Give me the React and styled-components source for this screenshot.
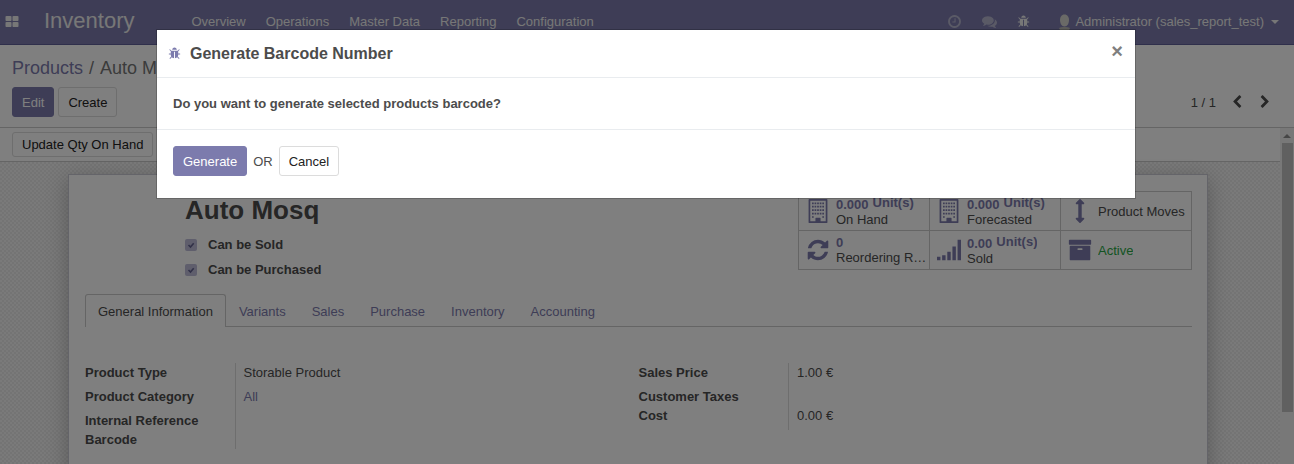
import React from "react";
import styled, { createGlobalStyle } from "styled-components";

const Global = createGlobalStyle`
  * { box-sizing: border-box; }
  body {
    margin: 0;
    overflow: hidden;
    font-family: "Liberation Sans", Arial, sans-serif;
    font-size: 13px;
    line-height: 19px;
    color: #4c4c4c;
    background: #fff;
  }
  button { font: inherit; cursor: pointer; }
  a { color: #7c7bad; text-decoration: none; }
`;

const PATHS = {
  grid: "M832 1024v384q0 52-38 90t-90 38h-512q-52 0-90-38t-38-90v-384q0-52 38-90t90-38h512q52 0 90 38t38 90zm0-768v384q0 52-38 90t-90 38h-512q-52 0-90-38t-38-90v-384q0-52 38-90t90-38h512q52 0 90 38t38 90zm896 768v384q0 52-38 90t-90 38h-512q-52 0-90-38t-38-90v-384q0-52 38-90t90-38h512q52 0 90 38t38 90zm0-768v384q0 52-38 90t-90 38h-512q-52 0-90-38t-38-90v-384q0-52 38-90t90-38h512q52 0 90 38t38 90z",
  clock: "M1024 544v448q0 14-9 23t-23 9h-320q-14 0-23-9t-9-23v-64q0-14 9-23t23-9h224v-352q0-14 9-23t23-9h64q14 0 23 9t9 23zm416 352q0-148-73-273t-198-198-273-73-273 73-198 198-73 273 73 273 198 198 273 73 273-73 198-198 73-273zm224 0q0 209-103 385.5t-279.5 279.5-385.5 103-385.5-103-279.5-279.5-103-385.5 103-385.5 279.5-279.5 385.5-103 385.5 103 279.5 279.5 103 385.5z",
  comments: "M1408 768q0 139-94 257t-256.5 186.5-353.5 68.5q-86 0-176-16-124 88-278 128-36 9-86 16h-3q-11 0-20.5-8t-11.5-21q-1-3-1-6.5t.5-6.5 2-6l2.5-5 3.5-5.5 4-5 4.5-5 4-4.5q5-6 23-25t26-29.5 22.5-29 25-38.5 20.5-44q-124-72-195-177t-71-224q0-139 94-257t256.5-186.5 353.5-68.5 353.5 68.5 256.5 186.5 94 257zm384 256q0 120-71 224.5t-195 176.5q10 24 20.5 44t25 38.5 22.5 29 26 29.5 23 25q1 1 4 4.5t4.5 5 4 5 3.5 5.5l2.5 5 2 6 .5 6.5-1 6.5q-3 14-13 22t-22 7q-50-7-86-16-154-40-278-128-90 16-176 16-271 0-472-132 58 4 88 4 161 0 309-45t264-129q125-92 192-212t67-254q0-77-23-152 129 71 204 178t75 230z",
  bug: "M1696 960q0 26-19 45t-45 19h-224q0 171-67 290l208 209q19 19 19 45t-19 45q-18 19-45 19t-45-19l-198-197q-5 5-15 13t-42 28.5-65 36.5-82 29-97 13v-896h-128v896q-51 0-101.5-13.5t-87-33-66-39-43.5-32.5l-15-14-183 207q-20 21-48 21-24 0-43-16-19-18-20.5-44.5t15.5-46.5l202-227q-58-114-58-274h-224q-26 0-45-19t-19-45 19-45 45-19h224v-294l-173-173q-19-19-19-45t19-45 45-19 45 19l173 173h844l173-173q19-19 45-19t45 19 19 45-19 45l-173 173v294h224q26 0 45 19t19 45zm-480-576h-640q0-133 93.5-226.5t226.5-93.5 226.5 93.5 93.5 226.5z",
  arrows: "M1216 320q0 26-19 45t-45 19h-128v1024h128q26 0 45 19t19 45-19 45l-256 256q-19 19-45 19t-45-19l-256-256q-19-19-19-45t19-45 45-19h128v-1024h-128q-26 0-45-19t-19-45 19-45l256-256q19-19 45-19t45 19l256 256q19 19 19 45z",
  refresh: "M1639 1056q0 5-1 7-64 268-268 434.5t-478 166.5q-146 0-282.5-55t-243.5-157l-129 129q-19 19-45 19t-45-19-19-45v-448q0-26 19-45t45-19h448q26 0 45 19t19 45-19 45l-137 137q71 66 161 102t187 36q134 0 250-65t186-179q11-17 53-117 8-23 30-23h192q13 0 22.5 9.5t9.5 22.5zm25-800v448q0 26-19 45t-45 19h-448q-26 0-45-19t-19-45 19-45l138-138q-148-137-349-137-134 0-250 65t-186 179q-11 17-53 117-8 23-30 23h-199q-13 0-22.5-9.5t-9.5-22.5v-7q65-268 270-434.5t480-166.5q146 0 284 55.5t245 156.5l130-129q19-19 45-19t45 19 19 45z",
  signal: "M0 1408h256v256h-256zM384 1280h256v384h-256zM768 1024h256v640h-256zM1152 640h256v1024h-256zM1536 128h256v1536h-256z",
  archive: "M1088 832q0-26-19-45t-45-19h-256q-26 0-45 19t-19 45 19 45 45 19h256q26 0 45-19t19-45zm576-192v960q0 26-19 45t-45 19h-1408q-26 0-45-19t-19-45v-960q0-26 19-45t45-19h1408q26 0 45 19t19 45zm64-448v256q0 26-19 45t-45 19h-1536q-26 0-45-19t-19-45v-256q0-26 19-45t45-19h1536q26 0 45 19t19 45z",
  left: "M1427 301l-531 531 531 531q19 19 19 45t-19 45l-166 166q-19 19-45 19t-45-19l-742-742q-19-19-19-45t19-45l742-742q19-19 45-19t45 19l166 166q19 19 19 45t-19 45z",
  right: "M1363 877l-742 742q-19 19-45 19t-45-19l-166-166q-19-19-19-45t19-45l531-531-531-531q-19-19-19-45t19-45l166-166q19-19 45-19t45 19l742 742q19 19 19 45t-19 45z",
};

const windows = [256, 512, 768, 1024, 1280]
  .flatMap((y) => [448, 640, 832, 1024, 1216].map((x) => [x, y]))
  .filter(([x, y]) => !(y === 1280 && x > 448 && x < 1216))
  .map(([x, y]) => `M${x} ${y}h128v128h-128z`)
  .join("");
PATHS.building = `M256 0h1280q64 0 64 64v1664q0 64-64 64h-1280q-64 0-64-64v-1664q0-64 64-64zM320 128v1536h384v-224q0-32 32-32h320q32 0 32 32v224h384v-1536z${windows}`;

const Svg = styled.svg`
  display: block;
  flex: none;
  width: ${(p) => p.$size}px;
  height: ${(p) => p.$size}px;
  fill: currentColor;
`;

function Icon({ name, size = 14 }) {
  return (
    <Svg $size={size} viewBox="0 0 1792 1792" aria-hidden="true">
      <path d={PATHS[name]} fillRule={name === "building" ? "evenodd" : "nonzero"} />
    </Svg>
  );
}

const Page = styled.div`
  display: flex;
  flex-direction: column;
  height: 100vh;
  overflow: hidden;
`;

const Navbar = styled.header`
  display: flex;
  align-items: center;
  flex: none;
  height: 45px;
  padding: 0 15px 1px 5px;
  background: #7c7bad;
  border-bottom: 1px solid #5f5e97;
  color: #eee;
`;

const NavIcon = styled.button`
  display: flex;
  padding: 0;
  border: 0;
  background: none;
  color: inherit;
  opacity: ${(p) => (p.$dim ? 0.5 : 1)};
`;

const Brand = styled.a`
  margin: 0 57px 0 25px;
  padding-bottom: 2px;
  font-size: 22px;
  line-height: 28px;
  color: #eee;
`;

const Menu = styled.nav`
  display: flex;
  gap: 20px;
  flex: 1;
  white-space: nowrap;
  a { color: #eee; }
`;

const Systray = styled.div`
  display: flex;
  align-items: center;
  gap: 20px;
`;

const UserButton = styled.button`
  display: flex;
  align-items: center;
  padding: 0;
  margin-left: 8px;
  border: 0;
  background: none;
  color: #eee;
  white-space: nowrap;
  svg { margin-right: 4px; }
`;

const Caret = styled.span`
  margin-left: 7px;
  border: 4px solid transparent;
  border-top-color: currentColor;
  border-bottom: 0;
`;

const ControlPanel = styled.section`
  flex: none;
  padding: 12px 22px 10px 12px;
  border-bottom: 1px solid #cacaca;
`;

const Breadcrumb = styled.nav`
  display: flex;
  gap: 6px;
  margin-bottom: 8px;
  font-size: 18px;
  line-height: 22px;
  color: #777;
`;

const Row = styled.div`
  display: flex;
  align-items: center;
  gap: 4px;
`;

const Button = styled.button`
  height: ${(p) => (p.$small ? 25 : 30)}px;
  padding: 0 9px;
  border: 1px solid ${(p) => (p.$primary ? "#7c7bad" : "#dcdcdc")};
  border-radius: 3px;
  background: ${(p) => (p.$primary ? "#7c7bad" : "#fff")};
  color: ${(p) => (p.$primary ? "#fff" : "#222")};
  white-space: nowrap;
`;

const Pager = styled.div`
  display: flex;
  align-items: center;
  gap: 14px;
  margin-left: auto;
  color: #4c4c4c;
`;

const Content = styled.main`
  display: flex;
  flex: 1;
  min-height: 0;
`;

const FormView = styled.div`
  flex: 1;
  min-width: 0;
  overflow: hidden;
  background: repeating-conic-gradient(#e8e8e8 0 25%, #f4f4f4 0 50%) 0 0 / 4px 4px;
`;

const Statusbar = styled.div`
  height: 34px;
  padding: 4px 12px;
  background: #fff;
  border-bottom: 1px solid #cacaca;
`;

const Scrollbar = styled.div`
  display: flex;
  flex-direction: column;
  align-items: center;
  flex: none;
  width: 14px;
  background: #f1f1f1;
`;

const ScrollUp = styled.span`
  margin: 6px 0 5px;
  border: 4px solid transparent;
  border-bottom-color: #8c8c8c;
  border-top: 0;
`;

const Thumb = styled.div`
  width: 11px;
  height: 80%;
  background: #c1c1c1;
`;

const SheetArea = styled.div`
  padding: 12px 72px 0 68px;
`;

const Sheet = styled.article`
  max-width: 1140px;
  min-height: 600px;
  margin: 0 auto;
  padding: 16px 15px 16px 16px;
  background: #fff;
  border: 1px solid #c8c8d3;
  box-shadow: 0 5px 20px rgba(0, 0, 0, 0.25);
`;

const SheetTop = styled.div`
  display: flex;
  justify-content: space-between;
  align-items: flex-start;
  margin-bottom: 9px;
`;

const Title = styled.div`
  padding-left: 100px;
  h1 {
    margin: 3px 0 9px;
    font-size: 26px;
    line-height: 32px;
  }
`;

const CheckRow = styled.label`
  display: flex;
  align-items: center;
  gap: 11px;
  height: 19px;
  margin-bottom: 6px;
  font-weight: bold;
`;

const Check = styled.input`
  appearance: none;
  width: 12px;
  height: 12px;
  margin: 0;
  border-radius: 2px;
  background: #bebdd9 url("data:image/svg+xml,%3Csvg xmlns='http://www.w3.org/2000/svg' viewBox='0 0 12 12'%3E%3Cpath d='M3.5 6l2 2 3.2-3.8' fill='none' stroke='%2363628f' stroke-width='1.6'/%3E%3C/svg%3E");
`;

const Stats = styled.div`
  display: grid;
  grid-template-columns: repeat(3, 131px);
  border: solid #cacaca;
  border-width: 1px 0 0 1px;
`;

const Stat = styled.button`
  display: flex;
  align-items: center;
  gap: 6px;
  height: 39px;
  min-width: 0;
  padding: 0 0 0 7px;
  border: solid #cacaca;
  border-width: 0 1px 1px 0;
  background: #fff;
  color: ${(p) => (p.$green ? "#28a745" : "#4c4c4c")};
  text-align: left;
  svg { color: #7c7bad; }
`;

const StatText = styled.span`
  min-width: 0;
  padding-top: ${(p) => (p.$unit ? 2 : 0)}px;
  line-height: 15px;
  overflow: hidden;
  text-overflow: ellipsis;
  white-space: nowrap;
  b { display: flex; gap: 4px; color: #7c7bad; }
`;

const Unit = styled.span`
  line-height: 12px;
`;

const Tabs = styled.div`
  display: flex;
  border-bottom: 1px solid #cacaca;
`;

const Tab = styled.button`
  height: 33px;
  margin-bottom: -1px;
  padding: 0 12px;
  border: 1px solid ${(p) => (p.$active ? "#cacaca" : "transparent")};
  border-bottom: 0;
  border-radius: 3px 3px 0 0;
  background: ${(p) => (p.$active ? "#fff" : "none")};
  color: ${(p) => (p.$active ? "#4c4c4c" : "#7c7bad")};
`;

const Groups = styled.div`
  display: grid;
  grid-template-columns: 1fr 1fr;
  align-items: start;
  padding-top: 36px;
`;

const Fields = styled.table`
  border-collapse: collapse;
  th {
    width: 150px;
    padding: 0;
    text-align: left;
    vertical-align: top;
  }
  td {
    padding: 0 0 0 8px;
    border-left: 1px solid #dcdcdc;
    vertical-align: top;
  }
`;

const FieldRow = styled.tr`
  height: ${(p) => (p.$tall ? 24 : 19)}px;
`;

const Overlay = styled.div`
  position: fixed;
  inset: 0;
  padding: 29px 158px 0 156px;
  background: rgba(0, 0, 0, 0.5);
`;

const Dialog = styled.section`
  max-width: 980px;
  margin: 0 auto;
  background: #fff;
  background-clip: padding-box;
  border: 1px solid rgba(0, 0, 0, 0.2);
`;

const DialogHeader = styled.header`
  display: flex;
  align-items: center;
  height: 48px;
  padding: 0 12px 0 11px;
  border-bottom: 1px solid #e9ecef;
  svg { color: #7c7bad; }
  h2 {
    flex: 1;
    margin: 0 0 0 9px;
    font-size: 16px;
    line-height: 24px;
  }
`;

const Close = styled.button`
  padding: 0 0 6px;
  border: 0;
  background: none;
  color: #7f7f7f;
  && { font-size: 20px; font-weight: bold; line-height: 20px; }
`;

const DialogBody = styled.div`
  padding: 16px;
  font-weight: bold;
`;

const DialogFooter = styled.footer`
  display: flex;
  align-items: center;
  gap: 6px;
  padding: 16px 16px 22px;
  border-top: 1px solid #e9ecef;
`;

const menu = ["Overview", "Operations", "Master Data", "Reporting", "Configuration"];
const stats = [
  { icon: "building", value: "0.000", unit: "Unit(s)", label: "On Hand" },
  { icon: "building", value: "0.000", unit: "Unit(s)", label: "Forecasted" },
  { icon: "arrows", label: "Product Moves" },
  { icon: "refresh", value: "0", label: "Reordering Rules" },
  { icon: "signal", value: "0.00", unit: "Unit(s)", label: "Sold" },
  { icon: "archive", label: "Active", green: true },
];
const tabs = ["General Information", "Variants", "Sales", "Purchase", "Inventory", "Accounting"];
const leftFields = [
  ["Product Type", "Storable Product", true],
  ["Product Category", <a href="#all">All</a>, true],
  ["Internal Reference", "", false],
  ["Barcode", "", false],
];
const rightFields = [
  ["Sales Price", "1.00 €", true],
  ["Customer Taxes", "", false],
  ["Cost", "0.00 €", true],
];

function FieldTable({ rows }) {
  return (
    <Fields>
      <tbody>
        {rows.map(([label, value, tall]) => (
          <FieldRow key={label} $tall={tall}>
            <th scope="row">{label}</th>
            <td>{value}</td>
          </FieldRow>
        ))}
      </tbody>
    </Fields>
  );
}

export default function App() {
  return (
    <>
      <Global />
      <Page>
        <Navbar>
          <NavIcon aria-label="Applications"><Icon name="grid" /></NavIcon>
          <Brand href="#inventory">Inventory</Brand>
          <Menu>
            {menu.map((m) => <a key={m} href={`#${m}`}>{m}</a>)}
          </Menu>
          <Systray>
            <NavIcon $dim aria-label="Activities"><Icon name="clock" size={15} /></NavIcon>
            <NavIcon $dim aria-label="Messages"><Icon name="comments" size={15} /></NavIcon>
            <NavIcon aria-label="Debug"><Icon name="bug" size={13} /></NavIcon>
            <UserButton>
              <svg width="13" height="16" viewBox="0 0 13 16" aria-hidden="true">
                <path d="M1 14q2-1 4-1h3q2 0 4 1l-1 2h-9z" fill="#b4b4b0" />
                <path d="M6.500 0.500C9.500 0.500 11 3 11 6S9.500 12.500 6.500 12.500 2 9 2 6 3.500 0.500 6.500 0.500z" fill="#d4d4cf" />
              </svg>
              Administrator (sales_report_test)
              <Caret />
            </UserButton>
          </Systray>
        </Navbar>
        <ControlPanel>
          <Breadcrumb>
            <a href="#products">Products</a>
            <span>/</span>
            <span>Auto Mosq</span>
          </Breadcrumb>
          <Row>
            <Button $primary>Edit</Button>
            <Button>Create</Button>
            <Pager>
              <span>1 / 1</span>
              <NavIcon aria-label="Previous"><Icon name="left" /></NavIcon>
              <NavIcon aria-label="Next"><Icon name="right" /></NavIcon>
            </Pager>
          </Row>
        </ControlPanel>
        <Content>
          <FormView>
            <Statusbar><Button $small>Update Qty On Hand</Button></Statusbar>
            <SheetArea>
              <Sheet>
                <SheetTop>
                  <Title>
                    <h1>Auto Mosq</h1>
                    <CheckRow><Check type="checkbox" defaultChecked />Can be Sold</CheckRow>
                    <CheckRow><Check type="checkbox" defaultChecked />Can be Purchased</CheckRow>
                  </Title>
                  <Stats>
                    {stats.map((s) => (
                      <Stat key={s.label} $green={s.green}>
                        <Icon name={s.icon} size={24} />
                        <StatText $unit={s.unit}>
                          {s.value && <b>{s.value}{s.unit && <Unit>{s.unit}</Unit>}</b>}
                          {s.label}
                        </StatText>
                      </Stat>
                    ))}
                  </Stats>
                </SheetTop>
                <Tabs role="tablist">
                  {tabs.map((t, i) => (
                    <Tab key={t} role="tab" aria-selected={i === 0} $active={i === 0}>{t}</Tab>
                  ))}
                </Tabs>
                <Groups>
                  <FieldTable rows={leftFields} />
                  <FieldTable rows={rightFields} />
                </Groups>
              </Sheet>
            </SheetArea>
          </FormView>
          <Scrollbar><ScrollUp /><Thumb /></Scrollbar>
        </Content>
      </Page>
      <Overlay>
        <Dialog role="dialog" aria-modal="true" aria-labelledby="dialog-title">
          <DialogHeader>
            <Icon name="bug" size={13} />
            <h2 id="dialog-title">Generate Barcode Number</h2>
            <Close aria-label="Close">×</Close>
          </DialogHeader>
          <DialogBody>Do you want to generate selected products barcode?</DialogBody>
          <DialogFooter>
            <Button $primary>Generate</Button>
            <span>OR</span>
            <Button>Cancel</Button>
          </DialogFooter>
        </Dialog>
      </Overlay>
    </>
  );
}
